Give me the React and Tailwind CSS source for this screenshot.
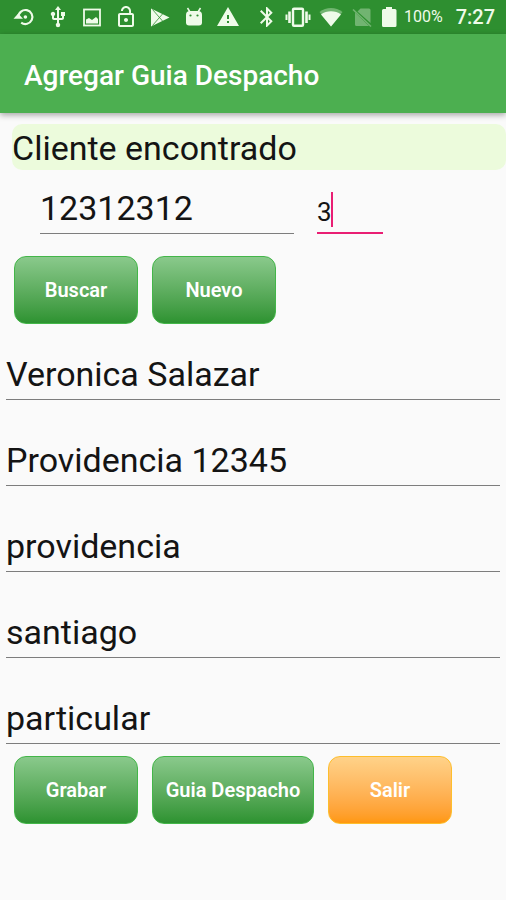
import React, { useState } from 'react';
import { MdUsb, MdLockOpen, MdWarning, MdBluetooth } from 'react-icons/md';

const SyncIcon = () => (
  <svg viewBox="0 0 24 24" className="w-6 h-6" fill="none">
    <path d="M6.4 13V12a7 7 0 1 1 2.8 5.6" stroke="currentColor" strokeWidth="2.2" />
    <path d="M1.5 13.8L6.2 8.5l4.8 5.3z" fill="currentColor" />
    <circle cx="13.4" cy="12" r="1.8" fill="currentColor" />
  </svg>
);

const ImageIcon = () => (
  <svg viewBox="0 0 24 24" className="w-6 h-6" fill="none">
    <rect x="4" y="4.5" width="16" height="16" stroke="currentColor" strokeWidth="1.8" />
    <path d="M6 18.5v-4l3-1.5 3 2 4-3 2 2v4.500z" fill="currentColor" />
  </svg>
);

const PlayIcon = () => (
  <svg viewBox="0 0 24 24" className="w-6 h-6" fill="none">
    <path d="M3 3.500L21.500 12.500 3 21.500z" fill="currentColor" />
    <path d="M4.500 4.500L14.500 16M4.500 20.500L14.500 9" stroke="#2e8f30" strokeWidth="0.8" />
  </svg>
);

const AndroidIcon = () => (
  <svg viewBox="0 0 24 24" className="w-6 h-6">
    <path d="M5.5 3l2.5 4M18.5 3L16 7" stroke="currentColor" strokeWidth="1.5" />
    <path d="M4 10a4 4 0 0 1 4-4h8a4 4 0 0 1 4 4v7.5a3 3 0 0 1-3 3H7a3 3 0 0 1-3-3z" fill="currentColor" />
    <circle cx="8.5" cy="10.5" r="1.1" fill="#2e8f30" />
    <circle cx="15.5" cy="10.5" r="1.1" fill="#2e8f30" />
  </svg>
);

const VibrateIcon = () => (
  <svg viewBox="0 0 28 24" className="w-7 h-6" fill="none" stroke="currentColor">
    <rect x="9" y="3.8" width="10" height="17" rx="1" strokeWidth="2.4" />
    <path d="M5.5 6.5v11.5M22.5 6.5v11.5" strokeWidth="2.6" />
    <path d="M2.5 9.5v5.500M25.5 9.5v5.500" strokeWidth="2" />
  </svg>
);

const WifiIcon = () => (
  <svg viewBox="0 0 28 24" className="w-7 h-6" fill="currentColor">
    <path d="M14 21.5L2.500 7C9 1.500 19 1.500 25.500 7z" opacity="0.35" />
    <path d="M14 21.500L4 9.500c5.500-4.300 14.500-4.300 20 0z" />
  </svg>
);

const NoSimIcon = () => (
  <svg viewBox="0 0 24 24" className="w-6 h-6 opacity-35">
    <path d="M10.500 3.500H19a1.500 1.500 0 0 1 1.500 1.500v13L7.500 6.500zM5 7.500L19 21H6.500A1.500 1.500 0 0 1 5 19.500z" fill="currentColor" />
    <path d="M3 4.500L21 21.500" stroke="currentColor" strokeWidth="1.600" />
  </svg>
);

const BatteryIcon = () => (
  <svg viewBox="0 0 20 24" className="w-5 h-6" fill="currentColor">
    <path d="M7 2h6v2h3a1.500 1.500 0 0 1 1.500 1.500v15A1.500 1.500 0 0 1 16 22H4.500A1.500 1.500 0 0 1 3 20.500v-15A1.500 1.500 0 0 1 4.500 4H7z" />
  </svg>
);

const buttonBase = 'h-[68px] rounded-xl border bg-origin-border text-xl font-semibold text-white';
const greenButton = 'border-[#43b649] bg-linear-to-b from-[#8bca8d] to-[#2b922f]';
const orangeButton = 'border-[#fdbe2c] bg-linear-to-b from-[#ffd38a] to-[#ff9705]';

const initialFields = [
  { name: 'nombre', label: 'Nombre', value: 'Veronica Salazar' },
  { name: 'direccion', label: 'Dirección', value: 'Providencia 12345' },
  { name: 'comuna', label: 'Comuna', value: 'providencia' },
  { name: 'ciudad', label: 'Ciudad', value: 'santiago' },
  { name: 'giro', label: 'Giro', value: 'particular' },
];

export default function App() {
  const [rut, setRut] = useState('12312312');
  const [dv, setDv] = useState('3');
  const [fields, setFields] = useState(initialFields);

  const handleChange = (name, value) => {
    setFields(fields.map((f) => (f.name === name ? { ...f, value } : f)));
  };

  return (
    <div className="min-h-screen bg-[#fafafa] font-[Roboto,sans-serif] text-[#141414]">
      {/* Status bar */}
      <div className="flex h-[34px] items-center justify-between bg-[#2e8f30] pl-3 pr-[11px] text-[#effbe9]">
        <div className="flex items-center gap-[10px]">
          <SyncIcon />
          <MdUsb size={24} />
          <ImageIcon />
          <MdLockOpen size={24} />
          <PlayIcon />
          <AndroidIcon />
          <MdWarning size={24} />
        </div>
        <div className="flex items-center gap-[5px]">
          <MdBluetooth size={24} />
          <VibrateIcon />
          <WifiIcon />
          <NoSimIcon />
          <BatteryIcon />
          <span className="text-base">100%</span>
          <span className="pl-2 text-xl font-medium">7:27</span>
        </div>
      </div>

      {/* App bar */}
      <header className="flex h-[79px] items-center bg-[#4caf50] px-6 pt-1 shadow-[0_2px_6px_rgba(0,0,0,0.35)]">
        <h1 className="text-[28px] font-medium text-white">Agregar Guia Despacho</h1>
      </header>

      <main className="pt-[11px]">
        <p className="ml-3 h-[46px] rounded-[10px] bg-[#ecfbdc] text-[34px] leading-[48px]">
          Cliente encontrado
        </p>

        <div className="flex items-end gap-[23px] pt-[14px] pl-10">
          <input
            type="text"
            aria-label="RUT"
            value={rut}
            onChange={(e) => setRut(e.target.value)}
            className="h-[50px] w-[254px] border-b border-[#7d7d7d] text-[34px] outline-none"
          />
          <div className="relative w-[66px]">
            <input
              type="text"
              aria-label="Dígito verificador"
              value={dv}
              onChange={(e) => setDv(e.target.value)}
              className="block h-[42px] w-full border-b-2 border-[#e91e73] text-[26px] outline-none"
            />
            <span className="absolute top-0 left-[14px] h-[35px] w-[2px] bg-[#e91e73]" />
          </div>
        </div>

        <div className="flex gap-[14px] px-[14px] pt-[22px]">
          <button type="button" className={`${buttonBase} ${greenButton} w-[124px]`}>Buscar</button>
          <button type="button" className={`${buttonBase} ${greenButton} w-[124px]`}>Nuevo</button>
        </div>

        <div className="flex flex-col gap-[36px] px-[6px] pt-[26px]">
          {fields.map((f) => (
            <input
              key={f.name}
              type="text"
              aria-label={f.label}
              value={f.value}
              onChange={(e) => handleChange(f.name, e.target.value)}
              className="h-[50px] w-full border-b border-[#7d7d7d] text-[34px] outline-none"
            />
          ))}
        </div>

        <div className="flex gap-[14px] px-[14px] pt-3">
          <button type="button" className={`${buttonBase} ${greenButton} w-[124px]`}>Grabar</button>
          <button type="button" className={`${buttonBase} ${greenButton} w-[162px]`}>Guia Despacho</button>
          <button type="button" className={`${buttonBase} ${orangeButton} w-[124px]`}>Salir</button>
        </div>
      </main>
    </div>
  );
}
